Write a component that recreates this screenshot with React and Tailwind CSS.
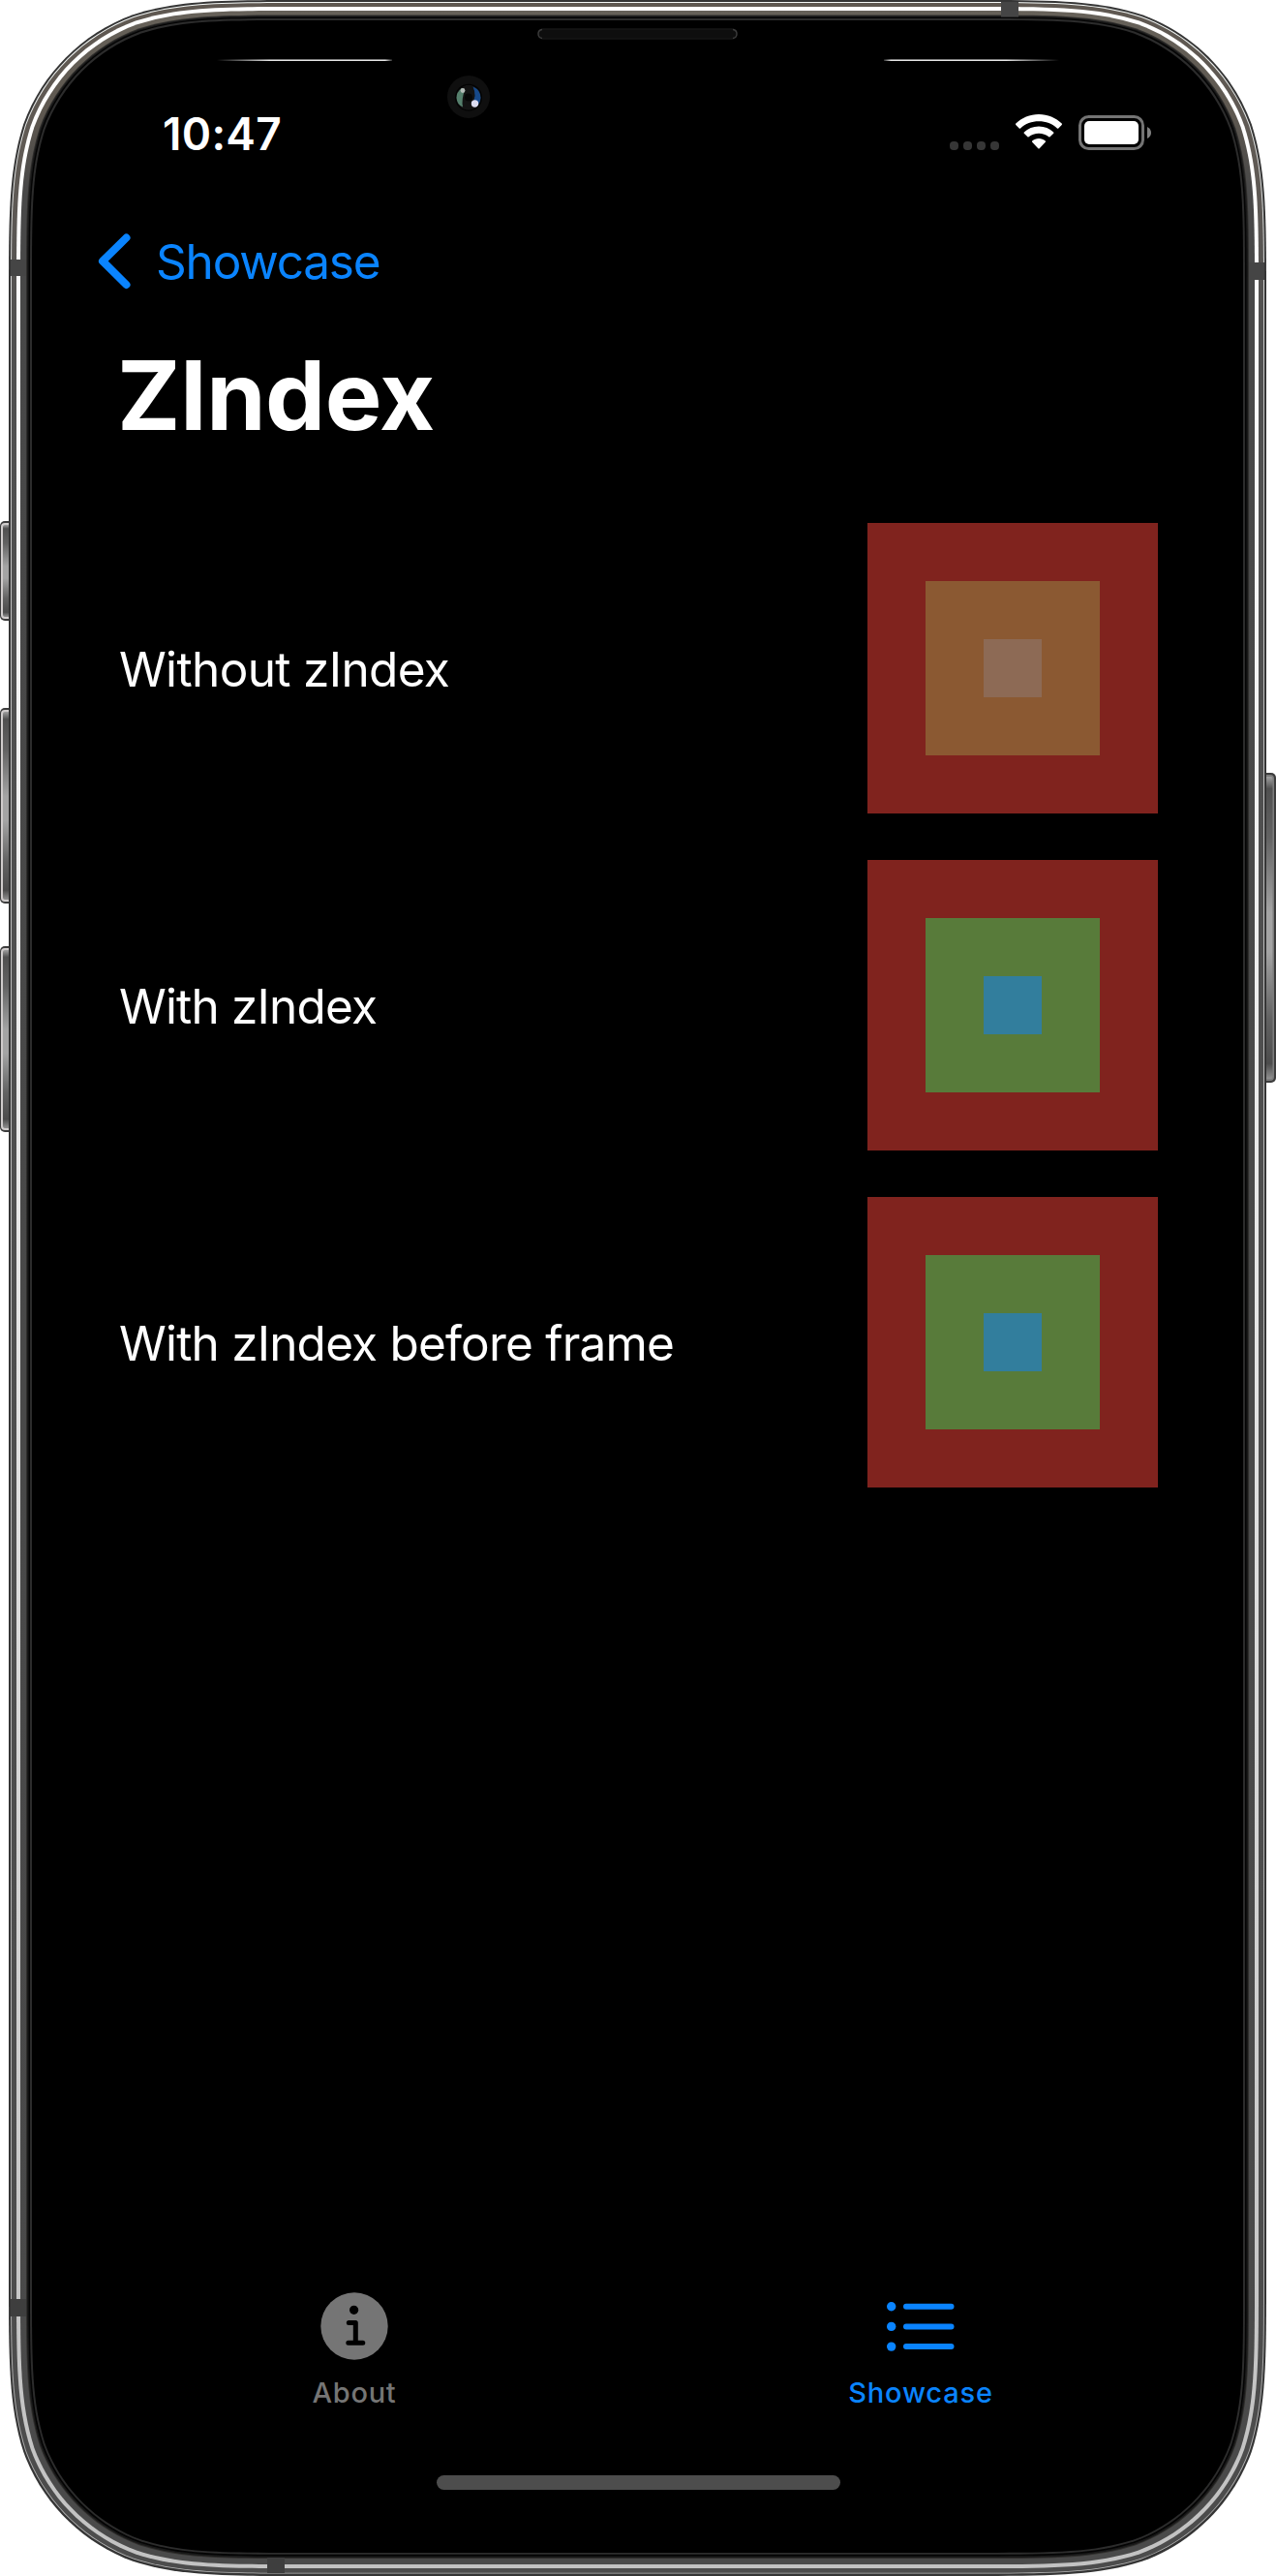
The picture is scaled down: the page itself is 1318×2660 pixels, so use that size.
const W = 1318;
const H = 2660;

// Rounded rectangle with continuous-curvature corners.
function squircle(l, t, r, b, rad) {
  const k = (n) => n * rad;
  const a = 1.528665, c1 = 1.08849296, c2 = 0.86840694, d = 0.63149379;
  const e = 0.07491139, f = 0.37282383, g = 0.16905956;
  return [
    `M${l + k(a)} ${t}L${r - k(a)} ${t}`,
    `C${r - k(c1)} ${t} ${r - k(c2)} ${t} ${r - k(d)} ${t + k(e)}`,
    `C${r - k(f)} ${t + k(g)} ${r - k(g)} ${t + k(f)} ${r - k(e)} ${t + k(d)}`,
    `C${r} ${t + k(c2)} ${r} ${t + k(c1)} ${r} ${t + k(a)}`,
    `L${r} ${b - k(a)}`,
    `C${r} ${b - k(c1)} ${r} ${b - k(c2)} ${r - k(e)} ${b - k(d)}`,
    `C${r - k(g)} ${b - k(f)} ${r - k(f)} ${b - k(g)} ${r - k(d)} ${b - k(e)}`,
    `C${r - k(c2)} ${b} ${r - k(c1)} ${b} ${r - k(a)} ${b}`,
    `L${l + k(a)} ${b}`,
    `C${l + k(c1)} ${b} ${l + k(c2)} ${b} ${l + k(d)} ${b - k(e)}`,
    `C${l + k(f)} ${b - k(g)} ${l + k(g)} ${b - k(f)} ${l + k(e)} ${b - k(d)}`,
    `C${l} ${b - k(c2)} ${l} ${b - k(c1)} ${l} ${b - k(a)}`,
    `L${l} ${t + k(a)}`,
    `C${l} ${t + k(c1)} ${l} ${t + k(c2)} ${l + k(e)} ${t + k(d)}`,
    `C${l + k(g)} ${t + k(f)} ${l + k(f)} ${t + k(g)} ${l + k(d)} ${t + k(e)}`,
    `C${l + k(c2)} ${t} ${l + k(c1)} ${t} ${l + k(a)} ${t}Z`,
  ].join("");
}

// [side inset, top inset, bottom inset, fill] from the outside in.
const RINGS = [
  [0, 0, 0, "#353535"],
  [2, 2, 2.5, "url(#hairline)"],
  [3, 3, 3.3, "url(#metal)"],
  [8, 7, 8, "url(#shine)"],
  [12, 11, 12, "url(#metalInner)"],
  [18, 15.5, 18, "#2f2e2c"],
  [19, 16.5, 19, "#181818"],
  [20.5, 17.7, 20.5, "#040404"],
  [22, 19, 22.2, "#2c2c2c"],
  [24, 21, 24, "#000"],
];

function SideButton({ x, y, h, right }) {
  return (
    <g>
      <rect x={x} y={y} width="16" height={h} rx="5" fill="#3c3c3c" />
      <rect x={right ? x : x + 1} y={y + 2} width="14" height={h - 4} rx="4" fill={right ? "#7c7c7c" : "#d0cccc"} />
      <rect x={right ? x - 1 : x + 3} y={y + 4} width="13.5" height={h - 8} rx="2" fill="url(#button)" />
    </g>
  );
}

function PhoneFrame() {
  return (
    <svg className="absolute inset-0" width={W} height={H} viewBox={`0 0 ${W} ${H}`} aria-hidden="true">
      <defs>
        <linearGradient id="hairline" x1="0" y1="0" x2="0" y2="1">
          <stop offset="0" stopColor="#f4f8f6" />
          <stop offset="0.15" stopColor="#c4c4c4" />
          <stop offset="0.9" stopColor="#a8a8a8" />
          <stop offset="1" stopColor="#b8b8b8" />
        </linearGradient>
        <linearGradient id="metal" x1="0" y1="0" x2="0" y2="1">
          <stop offset="0" stopColor="#5f5851" />
          <stop offset="0.07" stopColor="#5f5a55" />
          <stop offset="0.13" stopColor="#505050" />
          <stop offset="1" stopColor="#4c4c4c" />
        </linearGradient>
        <linearGradient id="metalInner" x1="0" y1="0" x2="0" y2="1">
          <stop offset="0" stopColor="#666159" />
          <stop offset="0.04" stopColor="#5e5850" />
          <stop offset="0.07" stopColor="#484848" />
          <stop offset="1" stopColor="#4a4a4a" />
        </linearGradient>
        <linearGradient id="shine" x1="0" y1="0" x2="0" y2="1">
          <stop offset="0" stopColor="#fff" />
          <stop offset="0.15" stopColor="#fafafa" />
          <stop offset="0.5" stopColor="#e6e6e6" />
          <stop offset="0.9" stopColor="#c6c6c6" />
          <stop offset="1" stopColor="#c2c2c2" />
        </linearGradient>
        <linearGradient id="button" x1="0" y1="0" x2="0" y2="1">
          <stop offset="0" stopColor="#a0a0a0" />
          <stop offset="0.04" stopColor="#505050" />
          <stop offset="0.2" stopColor="#626262" />
          <stop offset="0.45" stopColor="#a4a4a4" />
          <stop offset="0.58" stopColor="#a4a4a4" />
          <stop offset="0.8" stopColor="#626262" />
          <stop offset="0.95" stopColor="#4c4c4c" />
          <stop offset="1" stopColor="#909090" />
        </linearGradient>
        <linearGradient id="glintLeft">
          <stop offset="0" stopColor="#fff" stopOpacity="0" />
          <stop offset="0.3" stopColor="#fff" />
          <stop offset="0.96" stopColor="#fff" />
          <stop offset="1" stopColor="#fff" stopOpacity="0.2" />
        </linearGradient>
        <linearGradient id="glintRight">
          <stop offset="0" stopColor="#fff" stopOpacity="0.2" />
          <stop offset="0.04" stopColor="#fff" />
          <stop offset="0.7" stopColor="#fff" />
          <stop offset="1" stopColor="#fff" stopOpacity="0" />
        </linearGradient>
        <filter id="soft"><feGaussianBlur stdDeviation="0.7" /></filter>
        <clipPath id="lens"><circle cx="484" cy="100.7" r="13" /></clipPath>
      </defs>

      <SideButton x={0} y={538} h={103} />
      <SideButton x={0} y={731} h={202} />
      <SideButton x={0} y={977} h={192} />
      <SideButton x={1302} y={798} h={320} right />

      {RINGS.map(([s, t, b, fill]) => (
        <path key={s} d={squircle(9 + s, t, 1308 - s, H - b, 203 - s)} fill={fill} />
      ))}

      {/* Antenna bands */}
      <g fill="#454545">
        <rect x="1034" y="2" width="18" height="15.5" />
        <rect x="11" y="268" width="16" height="17" />
        <rect x="1290" y="271" width="16" height="18" />
        <rect x="11" y="2374" width="16" height="18" fill="#3e3e3e" />
        <rect x="276" y="2641" width="18" height="16" fill="#3e3e3e" />
      </g>

      <rect x="224" y="61.5" width="181" height="1.4" fill="url(#glintLeft)" />
      <rect x="913" y="61.5" width="181" height="1.4" fill="url(#glintRight)" />

      {/* Speaker */}
      <rect x="556" y="30" width="205" height="10" rx="5" fill="#0e0e0e" stroke="#161616" strokeWidth="1.5" />
      <path d="M560 30.5Q556 31 556 35T560 39.5M757 30.5Q761 31 761 35T757 39.5" fill="none" stroke="#3c3c3c" strokeWidth="1.3" />

      {/* Camera */}
      <circle cx="484" cy="100" r="22" fill="#0f0f0f" />
      <circle cx="484" cy="100.7" r="14" fill="#030303" />
      <g clipPath="url(#lens)">
        <circle cx="484" cy="100.7" r="13" fill="#121212" />
        <g filter="url(#soft)">
          <path d="M477 91Q471.500 95 471.500 101Q472 108 478 110.500Q476.500 103 480 93Z" fill="#557f6c" />
          <path d="M488.500 89.500Q496.500 93 496.500 101Q496 107 492 110L487.500 107Q493 99 488.500 89.500Z" fill="#17498a" />
          <circle cx="478" cy="93.5" r="2.4" fill="#b4bcb8" />
          <circle cx="490.500" cy="107" r="3.7" fill="#dcdcf0" />
        </g>
        <circle cx="484" cy="100.500" r="4" fill="#060606" />
      </g>
    </svg>
  );
}

function WifiIcon() {
  return (
    <svg width="48" height="36" viewBox="0 0 48 36" fill="#fff">
      <path d="M24 0C33.2 0 41.6 3.6 47.7 9.5C48.1 9.9 48.1 10.5 47.7 10.9L44.3 14.4C43.9 14.8 43.3 14.8 42.9 14.4C37.9 9.8 31.3 7.3 24 7.3S10.1 9.8 5.1 14.4C4.7 14.8 4.1 14.8 3.7 14.4L0.3 10.9C-0.1 10.5 -0.1 9.9 0.3 9.5C6.4 3.6 14.8 0 24 0Z" />
      <path d="M24 12.5C29.9 12.5 35.2 14.7 39.2 18.4C39.6 18.8 39.6 19.4 39.2 19.8L35.6 23.3C35.2 23.7 34.7 23.7 34.3 23.3C31.5 21 27.9 19.7 24 19.7S16.5 21 13.7 23.3C13.3 23.7 12.8 23.7 12.4 23.3L8.8 19.8C8.4 19.4 8.4 18.8 8.8 18.4C12.8 14.7 18.1 12.5 24 12.5Z" />
      <path d="M24 25C26.6 25 29 25.9 30.8 27.4C31.2 27.8 31.2 28.3 30.8 28.7L24.7 35.2C24.3 35.6 23.7 35.6 23.3 35.2L17.2 28.7C16.8 28.3 16.8 27.8 17.2 27.4C19 25.9 21.4 25 24 25Z" />
    </svg>
  );
}

function BatteryIcon() {
  return (
    <svg width="76" height="36" viewBox="0 0 76 36">
      <rect x="1.5" y="1.5" width="65" height="33" rx="9" fill="none" stroke="#747474" strokeWidth="3" />
      <rect x="6" y="6" width="56" height="24" rx="5" fill="#fff" />
      <path d="M71 12Q75 14 75 18T71 24Z" fill="#808080" />
    </svg>
  );
}

function InfoIcon() {
  return (
    <svg width="70" height="70" viewBox="0 0 70 70">
      <circle cx="35" cy="35" r="34.7" fill="#757575" />
      <circle cx="34.6" cy="18.3" r="4.6" fill="#000" />
      <path d="M29.300 31.5H36.300V51.8M28.800 52.2H43.800" fill="none" stroke="#000" strokeWidth="5" strokeLinecap="round" strokeLinejoin="round" />
    </svg>
  );
}

function ListIcon() {
  return (
    <svg width="70" height="70" viewBox="0 0 70 70" fill="#0a84ff">
      {[14.7, 35.4, 56.1].map((y) => (
        <g key={y}>
          <circle cx="4.700" cy={y} r="4.700" />
          <rect x="17" y={y - 3} width="52.500" height="6" rx="3" />
        </g>
      ))}
    </svg>
  );
}

function Squares({ middle, inner }) {
  return (
    <div className="flex size-[300px] items-center justify-center bg-[#80231e]">
      <div className={`flex size-[180px] items-center justify-center ${middle}`}>
        <div className={`size-[60px] ${inner}`} />
      </div>
    </div>
  );
}

const ROWS = [
  { label: "Without zIndex", spacing: "tracking-[-0.65px]", middle: "bg-[#8b5932]", inner: "bg-[#8d6a55]" },
  { label: "With zIndex", spacing: "tracking-[-0.82px]", middle: "bg-[#587b3a]", inner: "bg-[#327e9d]" },
  { label: "With zIndex before frame", spacing: "tracking-[-0.8px]", middle: "bg-[#587b3a]", inner: "bg-[#327e9d]" },
];

export default function App() {
  return (
    <div className="relative h-[2660px] w-[1318px] overflow-hidden bg-white font-['Inter',sans-serif] text-white">
      <PhoneFrame />
      <div className="relative flex h-full flex-col">
        <header className="mt-[101px] flex h-[72px] items-center justify-between pr-[128px] pl-[168px]">
          <span className="pt-px text-[46px] leading-[72px] font-semibold tracking-[0.3px] whitespace-nowrap">10:47</span>
          <div className="flex items-center">
            <div className="mt-[26px] mr-[17px] flex gap-[5px]">
              {[0, 1, 2, 3].map((i) => (
                <span key={i} className="size-[9px] rounded-[4px] bg-[#363636]" />
              ))}
            </div>
            <div className="mr-[17px] -mt-[2px]">
              <WifiIcon />
            </div>
            <BatteryIcon />
          </div>
        </header>

        <nav className="mt-[61px] flex h-[72px] items-center pl-[101px] text-[#0a84ff]">
          <svg width="60" height="72" viewBox="0 0 60 72" fill="none" stroke="currentColor" strokeWidth="8" strokeLinecap="round" strokeLinejoin="round">
            <path d="M29.500 11.500L5 35.700L29.500 60" />
          </svg>
          <span className="text-[49.5px] leading-[72px] tracking-[-1.2px] whitespace-nowrap">Showcase</span>
        </nav>

        <h1 className="mt-[52px] pl-[121px] text-[98.6px] leading-[100px] font-bold tracking-[-0.5px]">ZIndex</h1>

        <main className="mt-[82px] flex flex-col gap-[48px] pr-[122px] pl-[123px]">
          {ROWS.map((row) => (
            <div key={row.label} className="flex items-center justify-between">
              <span className={`pt-px text-[49.5px] leading-[60px] whitespace-nowrap ${row.spacing}`}>{row.label}</span>
              <Squares middle={row.middle} inner={row.inner} />
            </div>
          ))}
        </main>

        <footer className="mt-auto flex flex-col pb-[89px]">
          <div className="grid grid-cols-2 pr-[75px] pl-[73px] text-[29px] leading-[36px] font-medium">
            <div className="flex flex-col items-center gap-[16px] text-[#757575]">
              <InfoIcon />
              <span className="pl-px tracking-[0.7px]">About</span>
            </div>
            <div className="flex flex-col items-center gap-[16px] text-[#0a84ff]">
              <ListIcon />
              <span className="pl-px tracking-[0.84px]">Showcase</span>
            </div>
          </div>
          <div className="mt-[67px] ml-[451px] h-[15px] w-[417px] rounded-full bg-[#4d4d4d]" />
        </footer>
      </div>
    </div>
  );
}
